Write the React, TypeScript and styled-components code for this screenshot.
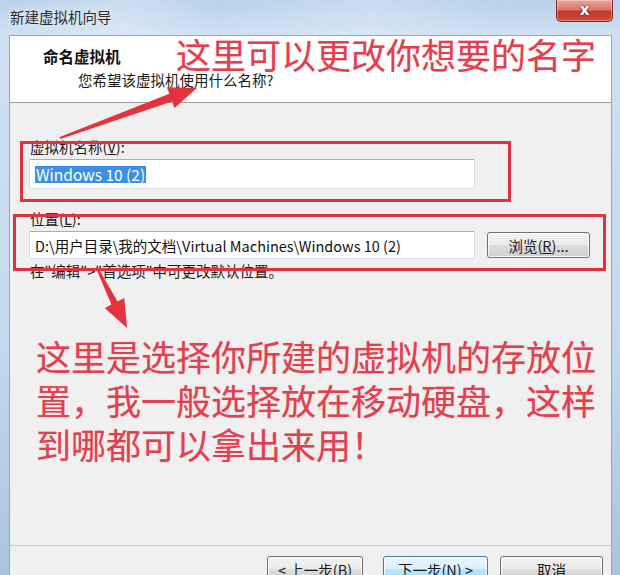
import React from "react";
import styled, { createGlobalStyle } from "styled-components";

const GlobalStyle = createGlobalStyle`
  html, body {
    margin: 0;
    padding: 0;
    overflow: hidden;
    background: #ffffff;
  }
`;

const UI_FONT = `"Noto Sans CJK SC", "Noto Sans", sans-serif`;

const Window = styled.div`
  position: relative;
  width: 620px;
  height: 575px;
  overflow: hidden;
  display: flex;
  flex-direction: column;
  font-family: ${UI_FONT};
  background:
    linear-gradient(90deg,
      rgba(255,255,255,0) 0%, rgba(255,255,255,0.25) 20%, rgba(255,255,255,0) 35%,
      rgba(255,255,255,0.2) 60%, rgba(255,255,255,0) 80%),
    linear-gradient(180deg, #b9d1ea 0%, #cfe0f1 6%, #c3d8ee 60%, #a9c3e0 100%);
`;

const TitleBar = styled.div`
  height: 35px;
  flex: none;
  display: flex;
  justify-content: space-between;
  align-items: flex-start;
`;

const Title = styled.div`
  margin: 8px 0 0 10px;
  font-size: 14.5px;
  line-height: 18px;
  color: #2b2b2b;
  text-shadow: 0 0 6px rgba(255,255,255,0.9);
`;

const CloseButton = styled.div`
  width: 55px;
  height: 21px;
  margin-right: 7px;
  border: 1px solid #7d2b22;
  border-top: none;
  border-radius: 0 0 5px 5px;
  background: linear-gradient(180deg, #e7a89c 0%, #d9786a 45%, #c2392a 55%, #cf4a33 100%);
  box-shadow: inset 0 0 0 1px rgba(255,255,255,0.35);
  display: flex;
  align-items: center;
  justify-content: center;
  color: #ffffff;
  font-family: "DejaVu Sans", sans-serif;
  font-weight: bold;
  font-size: 15px;
  line-height: 1;
  text-shadow: 0 0 2px #5a1a12, 0 0 1px #5a1a12;
`;

const Client = styled.div`
  flex: 1;
  min-height: 0;
  margin: 0 8px 0 9px;
  border: 1px solid #8fa7c2;
  border-bottom: none;
  background: #f0f0f0;
  display: flex;
  flex-direction: column;
`;

const Header = styled.div`
  height: 67px;
  flex: none;
  background: #ffffff;
  border-bottom: 1px solid #a0a0a0;
  padding: 10px 0 0 33px;
  box-sizing: border-box;
`;

const HeaderTitle = styled.div`
  font-size: 15.5px;
  line-height: 20px;
  font-weight: bold;
  color: #111;
`;

const HeaderSubtitle = styled.div`
  margin: 4px 0 0 35px;
  font-size: 14.5px;
  line-height: 20px;
  color: #1a1a1a;
`;

const Body = styled.div`
  flex: 1;
  padding: 35px 0 0 19px;
  display: flex;
  flex-direction: column;
  align-items: flex-start;
`;

const FieldLabel = styled.div<{ $gap?: number }>`
  margin: ${(p) => p.$gap ?? 0}px 0 0 1px;
  font-size: 14.5px;
  line-height: 18px;
  color: #1a1a1a;
`;

const FieldRow = styled.div`
  display: flex;
  align-items: center;
  gap: 12px;
  margin-top: 3px;
`;

const TextBox = styled.div<{ $h: number }>`
  width: 446px;
  height: ${(p) => p.$h}px;
  box-sizing: border-box;
  background: #ffffff;
  border: 1px solid #d6dde6;
  border-top-color: #abadb3;
  border-radius: 2px;
  padding: 0 5px;
  display: flex;
  align-items: center;
  font-size: 14.5px;
  color: #111;
  white-space: nowrap;
  overflow: hidden;
`;

const Selected = styled.span`
  background: #3c8fe6;
  color: #ffffff;
  padding: 0 1px;
  line-height: 17px;
  font-size: 15.5px;
`;

const PushButton = styled.div<{ $w: number; $focus?: boolean }>`
  width: ${(p) => p.$w}px;
  height: 26px;
  box-sizing: border-box;
  flex: none;
  border: 1px solid ${(p) => (p.$focus ? "#3c7fb1" : "#707070")};
  border-radius: 3px;
  background: ${(p) =>
    p.$focus
      ? "linear-gradient(180deg, #eaf6fd 0%, #d9f0fc 50%, #bee6fd 51%, #a7d9f5 100%)"
      : "linear-gradient(180deg, #f2f2f2 0%, #ebebeb 50%, #dddddd 51%, #cfcfcf 100%)"};
  box-shadow: inset 0 0 0 1px rgba(255,255,255,0.8);
  display: flex;
  align-items: center;
  justify-content: center;
  font-size: 14.5px;
  color: #1a1a1a;
`;

const Hint = styled.div`
  margin: 3px 0 0 1px;
  font-size: 14.5px;
  line-height: 18px;
  color: #1a1a1a;
`;

const Footer = styled.div`
  height: 30px;
  flex: none;
  border-top: 1px solid #c8c8c8;
  display: flex;
  justify-content: flex-end;
  align-items: flex-start;
  padding: 10px 8px 0 0;
  box-sizing: border-box;
`;

const FooterGroup = styled.div<{ $gap: number }>`
  display: flex;
  gap: ${(p) => p.$gap}px;
  margin-left: 12px;
`;

/* --- red annotations drawn over the dialog --- */

const Callout = styled.div<{ $top: number; $left: number; $size: number }>`
  position: absolute;
  top: ${(p) => p.$top}px;
  left: ${(p) => p.$left}px;
  font-family: "Noto Sans CJK SC", sans-serif;
  font-size: ${(p) => p.$size}px;
  line-height: 44px;
  color: #e2404f;
  white-space: nowrap;
  text-shadow: 0 0 1px rgba(240, 120, 130, 0.6);
  pointer-events: none;
`;

const RedFrame = styled.div<{ $top: number; $left: number; $w: number; $h: number }>`
  position: absolute;
  top: ${(p) => p.$top}px;
  left: ${(p) => p.$left}px;
  width: ${(p) => p.$w}px;
  height: ${(p) => p.$h}px;
  box-sizing: border-box;
  border: 3px solid #df3341;
  pointer-events: none;
`;

const ArrowLayer = styled.svg`
  position: absolute;
  inset: 0;
  pointer-events: none;
`;

export default function App() {
  return (
    <>
      <GlobalStyle />
      <Window>
        <TitleBar>
          <Title>新建虚拟机向导</Title>
          <CloseButton>x</CloseButton>
        </TitleBar>
        <Client>
          <Header>
            <HeaderTitle>命名虚拟机</HeaderTitle>
            <HeaderSubtitle>您希望该虚拟机使用什么名称?</HeaderSubtitle>
          </Header>
          <Body>
            <FieldLabel>
              虚拟机名称(<u>V</u>):
            </FieldLabel>
            <FieldRow>
              <TextBox $h={30}>
                <Selected>Windows 10 (2)</Selected>
              </TextBox>
            </FieldRow>
            <FieldLabel $gap={21}>
              位置(<u>L</u>):
            </FieldLabel>
            <FieldRow>
              <TextBox $h={28}>D:\用户目录\我的文档\Virtual Machines\Windows 10 (2)</TextBox>
              <PushButton $w={103}>
                浏览(<u>R</u>)...
              </PushButton>
            </FieldRow>
            <Hint>在"编辑"&gt;"首选项"中可更改默认位置。</Hint>
          </Body>
          <Footer>
            <FooterGroup $gap={20}>
              <PushButton $w={96}>
                &lt; 上一步(<u>B</u>)
              </PushButton>
              <PushButton $w={105} $focus>
                下一步(<u>N</u>) &gt;
              </PushButton>
            </FooterGroup>
            <FooterGroup $gap={0}>
              <PushButton $w={103}>取消</PushButton>
            </FooterGroup>
          </Footer>
        </Client>

        <RedFrame $top={141} $left={20} $w={491} $h={61} />
        <RedFrame $top={214} $left={13} $w={593} $h={57} />

        <ArrowLayer width="620" height="575" viewBox="0 0 620 575">
          <polygon
            fill="#e5323c"
            points="59.7,137.1 169.3,93.8 166.9,87.3 197,88 174.5,107.9 172.1,101.4 60.3,138.9"
          />
          <polygon
            fill="#e5323c"
            points="97.9,267.6 117.6,301.4 124.3,298.1 127,328 104.7,307.9 111.4,304.6 96.1,268.4"
          />
        </ArrowLayer>

        <Callout $top={32} $left={176} $size={35}>
          这里可以更改你想要的名字
        </Callout>
        <Callout $top={334} $left={36} $size={35}>
          这里是选择你所建的虚拟机的存放位
          <br />
          置，我一般选择放在移动硬盘，这样
          <br />
          到哪都可以拿出来用！
        </Callout>
      </Window>
    </>
  );
}
